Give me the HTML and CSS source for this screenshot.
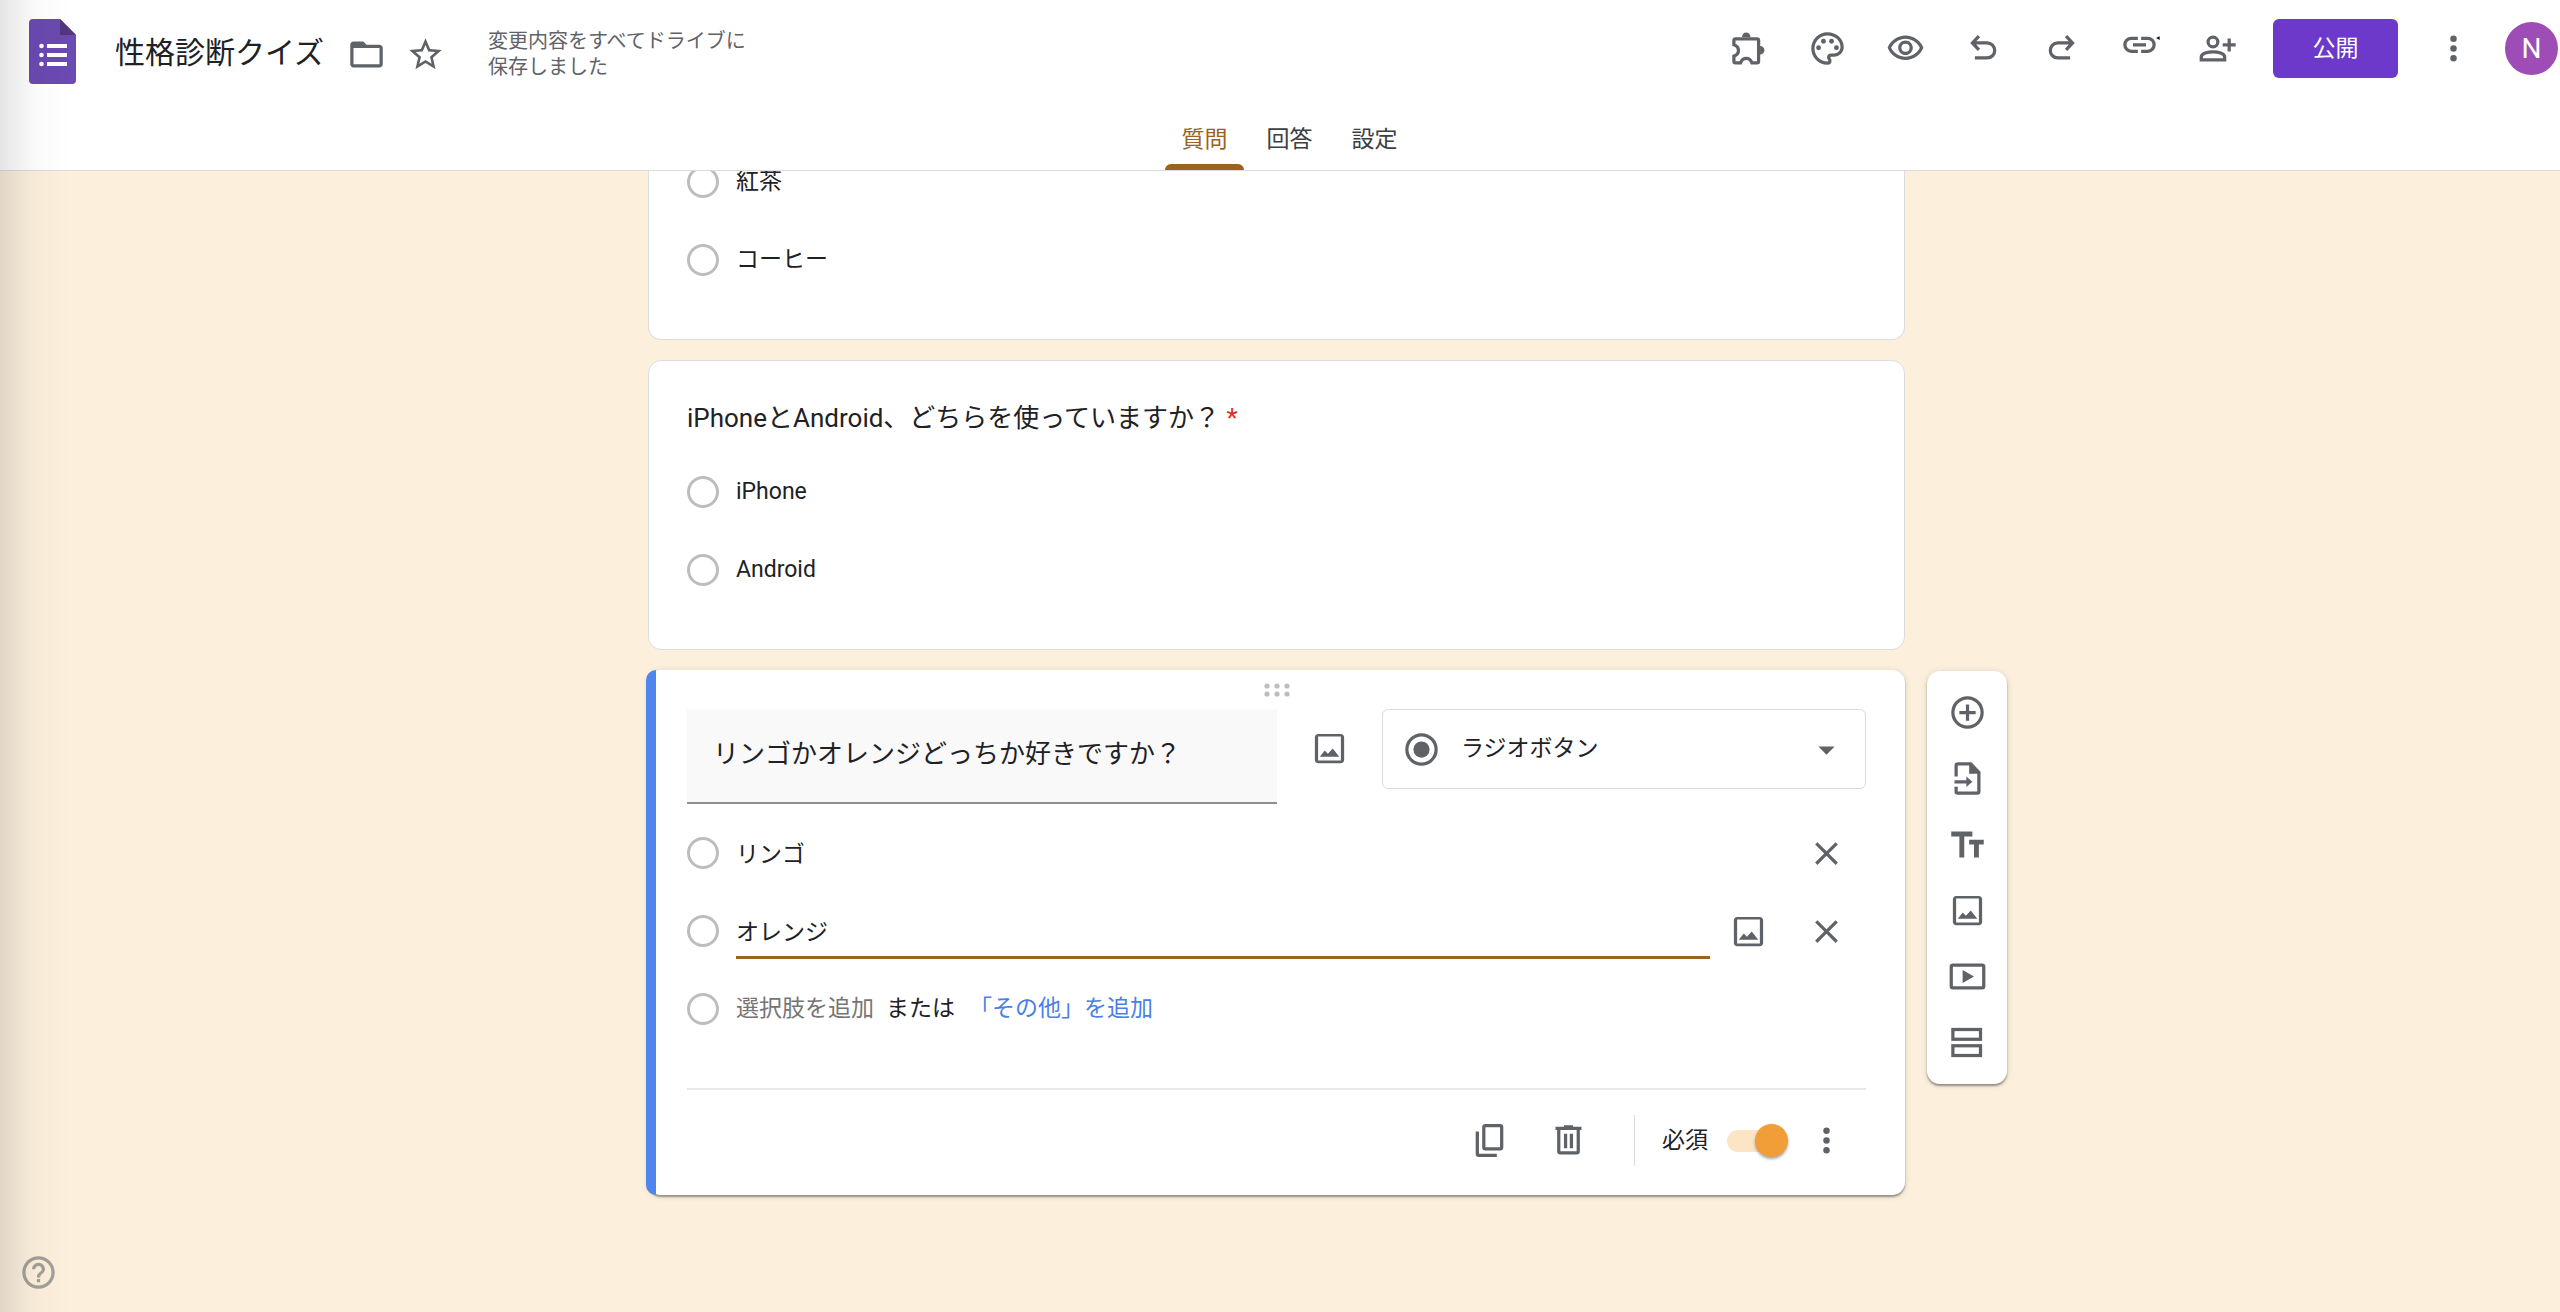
FILE: index.html
```html
<!DOCTYPE html>
<html lang="ja">

<head>
  <meta charset="utf-8" />
  <title>性格診断クイズ</title>
  <meta name="viewport" content="width=device-width, initial-scale=1">
  <link rel="stylesheet" href="styles.css">
</head>

<body>
  <svg class="sprite" aria-hidden="true">
    <symbol id="icon-image" viewBox="0 0 24 24">
      <path d="M19 3H5c-1.1 0-2 .9-2 2v14c0 1.1.9 2 2 2h14c1.1 0 2-.9 2-2V5c0-1.1-.9-2-2-2zm0 16.4H5V4.6h14z"/>
      <path d="M6 17l3.1-3.8L11 15.3l3-3.3 4 5z"/>
    </symbol>
    <symbol id="icon-close" viewBox="0 0 24 24">
      <path d="M19 6.4L17.6 5 12 10.6 6.4 5 5 6.4l5.6 5.6L5 17.6 6.4 19l5.6-5.6 5.6 5.6 1.4-1.4-5.6-5.6z"/>
    </symbol>
    <symbol id="icon-more" viewBox="0 0 24 24">
      <circle cx="12" cy="6" r="2"/><circle cx="12" cy="12" r="2"/><circle cx="12" cy="18" r="2"/>
    </symbol>
  </svg>

  <header class="header">
    <div class="header-top">
      <svg class="logo" viewBox="0 0 47 65">
        <path fill="#6b4ab1" d="M4 0h27l16 16v45a4 4 0 0 1-4 4H4a4 4 0 0 1-4-4V4a4 4 0 0 1 4-4z"/>
        <path fill="#523682" d="M31 0l16 16H31z"/>
        <g fill="#fff">
          <circle cx="12.5" cy="27" r="2.3"/><circle cx="12.5" cy="36" r="2.3"/><circle cx="12.5" cy="45" r="2.3"/>
          <path d="M18 25h20v4H18zM18 34h20v4H18zM18 43h20v4H18z"/>
        </g>
      </svg>
      <input class="form-title" type="text" value="性格診断クイズ" aria-label="フォームのタイトル">
      <div class="file-actions">
        <button class="icon-btn" aria-label="フォルダに移動">
          <svg class="icon" viewBox="0 0 24 24"><path d="M20 6h-8l-2-2H4c-1.1 0-2 .9-2 2v12c0 1.1.9 2 2 2h16c1.1 0 2-.9 2-2V8c0-1.1-.9-2-2-2zm0 12H4V8h16z"/></svg>
        </button>
        <button class="icon-btn" aria-label="スターを付ける">
          <svg class="icon" viewBox="0 0 24 24"><path d="M22 9.24l-7.19-.62L12 2 9.19 8.63 2 9.24l5.46 4.73L5.82 21 12 17.27 18.18 21l-1.63-7.03L22 9.24zM12 15.4l-3.76 2.27 1-4.28-3.32-2.88 4.38-.38L12 6.1l1.71 4.04 4.38.38-3.32 2.88 1 4.28L12 15.4z"/></svg>
        </button>
      </div>
      <p class="save-state">変更内容をすべてドライブに保存しました</p>

      <div class="toolbar">
        <div class="tools">
          <button class="icon-btn" aria-label="アドオン">
            <svg class="icon" viewBox="0 0 24 24">
              <path class="line" d="M3.4 6h13.2a1 1 0 0 1 1 1v12.9a1 1 0 0 1-1 1h-3.1c-.6-1.8-1.9-2.8-3.5-2.8s-2.9 1-3.5 2.8H3.4a1 1 0 0 1-1-1v-3.2C4.2 16.1 5.2 14.8 5.2 13.2S4.2 10.3 2.4 9.7V7a1 1 0 0 1 1-1z"/>
              <path d="M7.4 5a2.6 2.9 0 0 1 5.2 0zM18.5 10.5a2.7 2.6 0 0 1 0 5.2z"/>
            </svg>
          </button>
          <button class="icon-btn" aria-label="テーマをカスタマイズ">
            <svg class="icon" viewBox="0 0 24 24">
              <path d="M12 22C6.49 22 2 17.51 2 12S6.49 2 12 2s10 4.04 10 9c0 3.31-2.69 6-6 6h-1.77c-.28 0-.5.22-.5.5 0 .12.05.23.13.33.41.47.64 1.06.64 1.67A2.5 2.5 0 0 1 12 22zm0-18c-4.41 0-8 3.59-8 8s3.59 8 8 8c.28 0 .5-.22.5-.5a.54.54 0 0 0-.14-.35c-.41-.46-.63-1.05-.63-1.65a2.5 2.5 0 0 1 2.5-2.5H16c2.21 0 4-1.79 4-4 0-3.86-3.59-7-8-7z"/>
              <circle cx="6.5" cy="11.5" r="1.5"/><circle cx="9.5" cy="7.5" r="1.5"/><circle cx="14.5" cy="7.5" r="1.5"/><circle cx="17.5" cy="11.5" r="1.5"/>
            </svg>
          </button>
          <button class="icon-btn" aria-label="プレビュー">
            <svg class="icon" viewBox="0 0 24 24"><path d="M12 6c3.79 0 7.17 2.13 8.82 5.5C19.17 14.87 15.79 17 12 17s-7.17-2.13-8.82-5.5C4.83 8.13 8.21 6 12 6m0-2C7 4 2.73 7.11 1 11.5 2.73 15.89 7 19 12 19s9.27-3.11 11-7.5C21.27 7.11 17 4 12 4zm0 5a2.5 2.5 0 0 1 0 5 2.5 2.5 0 0 1 0-5m0-2c-2.48 0-4.5 2.02-4.5 4.5S9.52 16 12 16s4.5-2.02 4.5-4.5S14.48 7 12 7z"/></svg>
          </button>
          <button class="icon-btn" aria-label="元に戻す">
            <svg class="icon" viewBox="0 0 24 24"><path class="line" d="M9.2 4.4L5.2 8.6l4 4.2M5.2 8.6h9.1a4.6 4.6 0 0 1 0 9.2H6.7"/></svg>
          </button>
          <button class="icon-btn" aria-label="やり直す">
            <svg class="icon" viewBox="0 0 24 24"><path class="line" d="M14.8 4.4l4 4.2-4 4.2M18.8 8.6H9.7a4.6 4.6 0 0 0 0 9.2h7.6"/></svg>
          </button>
          <button class="icon-btn" aria-label="回答者へのリンクをコピー">
            <svg class="icon" viewBox="0 0 24 24">
              <path class="line" d="M11 5.7H7a4 4 0 0 0 0 8h4M13 5.7h4a4 4 0 0 1 0 8h-4M8 9.7h8"/>
              <path fill="#000" d="M22.2 5.6l2.2-1.2v2.4z"/>
            </svg>
          </button>
          <button class="icon-btn" aria-label="共同編集者を追加">
            <svg class="icon" viewBox="0 0 24 24"><path class="line" d="M9.2 5a3 3 0 1 1 0 6 3 3 0 0 1 0-6zM2 19v-1.8C2 15 6.2 14 9.2 14s7.2 1 7.2 3.2V19zM19.2 5.8v8M15.2 9.8h8"/></svg>
          </button>
        </div>
        <button class="publish">公開</button>
        <button class="icon-btn" aria-label="その他"><svg class="icon"><use href="#icon-more"/></svg></button>
        <button class="avatar" aria-label="アカウント">N</button>
      </div>
    </div>

    <nav class="tabs">
      <a class="current" href="#">質問</a>
      <a href="#">回答</a>
      <a href="#">設定</a>
    </nav>
  </header>

  <main class="board">
    <section class="card card-cut">
      <label class="option"><input type="radio" name="drink" disabled><span>紅茶</span></label>
      <label class="option"><input type="radio" name="drink" disabled><span>コーヒー</span></label>
    </section>

    <section class="card">
      <h2 class="question">iPhoneとAndroid、どちらを使っていますか？ <span class="required">*</span></h2>
      <label class="option"><input type="radio" name="phone" disabled><span>iPhone</span></label>
      <label class="option"><input type="radio" name="phone" disabled><span>Android</span></label>
    </section>

    <section class="card card-edit">
      <div class="drag">
        <svg width="26" height="16" viewBox="0 0 26 16">
          <circle cx="3" cy="4" r="2.6"/><circle cx="13" cy="4" r="2.6"/><circle cx="23" cy="4" r="2.6"/>
          <circle cx="3" cy="12" r="2.6"/><circle cx="13" cy="12" r="2.6"/><circle cx="23" cy="12" r="2.6"/>
        </svg>
      </div>

      <div class="edit-head">
        <input class="question-input" type="text" value="リンゴかオレンジどっちか好きですか？" aria-label="質問">
        <button class="icon-btn" aria-label="画像を追加"><svg class="icon"><use href="#icon-image"/></svg></button>
        <div class="type-select">
          <svg class="icon" viewBox="0 0 24 24"><circle class="line" cx="12" cy="12" r="9"/><circle cx="12" cy="12" r="5"/></svg>
          <select aria-label="質問の形式">
            <option>ラジオボタン</option>
          </select>
          <svg class="icon" viewBox="0 0 24 24"><path d="M7 10.2l5 5 5-5z"/></svg>
        </div>
      </div>

      <div class="edit-options">
        <div class="option">
          <input type="radio" name="fruit" aria-label="選択肢 1" disabled>
          <input class="option-input" type="text" value="リンゴ" aria-label="選択肢 1 のテキスト">
          <button class="icon-btn" aria-label="削除"><svg class="icon"><use href="#icon-close"/></svg></button>
        </div>
        <div class="option">
          <input type="radio" name="fruit" aria-label="選択肢 2" disabled>
          <input class="option-input editing" type="text" value="オレンジ" aria-label="選択肢 2 のテキスト">
          <button class="icon-btn" aria-label="画像を追加"><svg class="icon"><use href="#icon-image"/></svg></button>
          <button class="icon-btn" aria-label="削除"><svg class="icon"><use href="#icon-close"/></svg></button>
        </div>
        <div class="option">
          <input type="radio" name="fruit" aria-label="新しい選択肢" disabled>
          <button class="add-option">選択肢を追加</button>
          <span class="or">または</span>
          <button class="add-other">「その他」を追加</button>
        </div>
      </div>

      <div class="edit-foot">
        <button class="icon-btn" aria-label="コピーを作成">
          <svg class="icon" viewBox="0 0 24 24"><path class="line" d="M9.5 2.8h9a1 1 0 0 1 1 1v12.4a1 1 0 0 1-1 1h-9a1 1 0 0 1-1-1V3.8a1 1 0 0 1 1-1zM4.5 6.5v13.7a1 1 0 0 0 1 1h11"/></svg>
        </button>
        <button class="icon-btn" aria-label="削除">
          <svg class="icon" viewBox="0 0 24 24"><path class="line" d="M4 4.6h16M9.2 3.6h5.6M6 5v13.6a1 1 0 0 0 1 1h10a1 1 0 0 0 1-1V5M10.2 7.8v9M13.8 7.8v9"/></svg>
        </button>
        <div class="required-box">
          <label for="required">必須</label>
          <input class="toggle" id="required" type="checkbox" checked>
          <button class="icon-btn" aria-label="その他のオプション"><svg class="icon"><use href="#icon-more"/></svg></button>
        </div>
      </div>
    </section>

    <aside class="side-tools">
      <button class="icon-btn" aria-label="質問を追加">
        <svg class="icon" viewBox="0 0 24 24"><path class="line" d="M12 3a9 9 0 1 1 0 18 9 9 0 0 1 0-18zM12 7v10M7 12h10"/></svg>
      </button>
      <button class="icon-btn" aria-label="質問をインポート">
        <svg class="icon" viewBox="0 0 24 24">
          <path class="line" d="M5 10.8V4a1 1 0 0 1 1-1h8l5 5.2V20a1 1 0 0 1-1 1H6a1 1 0 0 1-1-1v-3M4 14h9"/>
          <path d="M13 2.5h1.5l5 5.5v1H13zM11.3 10.8L15 14l-3.7 3.2z"/>
        </svg>
      </button>
      <button class="icon-btn" aria-label="タイトルと説明を追加">
        <svg class="icon" viewBox="0 0 24 24"><path d="M2 4v3h5v13h3V7h5V4zM13 9v3h3v8h3v-8h3V9z"/></svg>
      </button>
      <button class="icon-btn" aria-label="画像を追加"><svg class="icon"><use href="#icon-image"/></svg></button>
      <button class="icon-btn" aria-label="動画を追加">
        <svg class="icon" viewBox="0 0 24 24">
          <rect class="line" x="2" y="5" width="20" height="14" rx="1"/>
          <path d="M9 8l7 4-7 4z"/>
        </svg>
      </button>
      <button class="icon-btn" aria-label="セクションを追加">
        <svg class="icon" viewBox="0 0 24 24">
          <rect class="line" x="3" y="4" width="17" height="6"/><rect class="line" x="3" y="14" width="17" height="6"/>
        </svg>
      </button>
    </aside>
  </main>

  <button class="help" aria-label="ヘルプ">
    <svg class="icon" viewBox="0 0 24 24"><path d="M11 18h2v-2h-2v2zm1-16C6.48 2 2 6.48 2 12s4.48 10 10 10 10-4.48 10-10S17.52 2 12 2zm0 18c-4.41 0-8-3.59-8-8s3.59-8 8-8 8 3.59 8 8-3.59 8-8 8zm0-14c-2.21 0-4 1.79-4 4h2c0-1.1.9-2 2-2s2 .9 2 2c0 2-3 1.75-3 5h2c0-2.25 3-2.5 3-5 0-2.21-1.79-4-4-4z"/></svg>
  </button>
</body>

</html>
```

FILE: styles.css
```css
* {
  margin: 0;
  padding: 0;
  box-sizing: border-box;
}

body {
  min-height: 100vh;
  background: #fcf0dd;
  font: 23px/32px Roboto, "Noto Sans CJK JP", sans-serif;
  color: #202124;
}

/* shade along the left edge of the window */
body::before {
  content: '';
  position: fixed;
  top: 0;
  bottom: 0;
  left: 0;
  z-index: 5;
  width: 70px;
  background: linear-gradient(to right, rgba(0, 0, 0, .1), rgba(0, 0, 0, .02) 50%, transparent);
  pointer-events: none;
}

button,
input,
select {
  border: 0;
  outline: 0;
  background: none;
  font: inherit;
  color: inherit;
}

button {
  cursor: pointer;
}

a {
  color: inherit;
  text-decoration: none;
}

.sprite {
  display: none;
}

.icon {
  display: block;
  flex: none;
  width: 39px;
  height: 39px;
  overflow: visible;
  fill: #5f6368;
}
.icon .line {
  fill: none;
  stroke: #5f6368;
  stroke-width: 2;
}
.icon-btn {
  flex: none;
}

/* header */
.header {
  position: relative;
  z-index: 2;
  border-bottom: 1px solid #dadce0;
  background: #fff;
}
.header-top {
  display: flex;
  align-items: center;
  height: 103px;
  padding: 0 2px 0 29px;
}
.logo {
  flex: none;
  width: 47px;
  height: 65px;
  margin-right: 39px;
}
.form-title {
  width: 212px;
  margin-right: 20px;
  padding-top: 2px;
  font-size: 30px;
  line-height: 40px;
}
.file-actions {
  display: flex;
  gap: 20px;
  padding-top: 6px;
}
.save-state {
  width: 265px;
  margin-left: 43px;
  padding-top: 4px;
  font-size: 20px;
  line-height: 26px;
  color: #5f6368;
}
.toolbar {
  display: flex;
  align-items: center;
  gap: 36px;
  margin-left: auto;
  padding-bottom: 6px;
}
.tools {
  display: flex;
  gap: 39px;
}
.publish {
  width: 125px;
  height: 59px;
  border-radius: 6px;
  background: #6d39ca;
  color: #fff;
}
.avatar {
  width: 53px;
  height: 53px;
  margin-left: -4px;
  border-radius: 50%;
  background: #9f4db6;
  font-size: 28px;
  color: #fff;
}

.tabs {
  display: flex;
  justify-content: center;
  gap: 6px;
  padding-left: 19px;
  color: #3c4043;
}
.tabs a {
  position: relative;
  width: 79px;
  padding: 21px 0 14px;
  text-align: center;
}
.tabs .current {
  color: #9a6420;
}
.tabs .current::after {
  content: '';
  position: absolute;
  right: 0;
  bottom: 0;
  left: 0;
  height: 6px;
  border-radius: 6px 6px 0 0;
  background: #9a6420;
}

/* questions, scrolled under the header */
.board {
  display: grid;
  grid-template-columns: 1fr minmax(0, 1257px) 1fr;
  row-gap: 20px;
  margin-top: -28px;
  padding: 0 7px 60px 0;
}
.card {
  position: relative;
  grid-column: 2;
  padding: 37px 38px 40px;
  border: 1px solid #dadce0;
  border-radius: 13px;
  background: #fff;
}
.card-cut {
  padding-top: 0;
  border-top: 0;
  border-radius: 0 0 13px 13px;
}
.question {
  margin-bottom: 15px;
  font-size: 26px;
  font-weight: normal;
  line-height: 40px;
}
.required {
  color: #d93025;
}

.option {
  display: flex;
  align-items: center;
  height: 78px;
}
.option input[type="radio"] {
  appearance: none;
  flex: none;
  width: 32px;
  height: 32px;
  margin-right: 17px;
  border: 3px solid #bdbdbd;
  border-radius: 50%;
}

/* question being edited */
.card-edit {
  padding: 0 39px;
  border: 0;
  box-shadow: 0 2px 2px rgba(0, 0, 0, .35), 0 1px 6px rgba(0, 0, 0, .15);
}
.card-edit::before {
  content: '';
  position: absolute;
  top: 0;
  bottom: 0;
  left: -2px;
  width: 10px;
  border-radius: 13px 0 0 13px;
  background: #5185ee;
}
.drag {
  display: flex;
  justify-content: center;
  align-items: center;
  height: 39px;
  fill: #bdbdbd;
}
.edit-head {
  display: flex;
  align-items: flex-start;
  gap: 33px;
}
.edit-head .icon-btn {
  height: 78px;
}
.question-input {
  flex: 1;
  min-width: 0;
  height: 95px;
  padding: 0 26px 8px;
  border-bottom: 2px solid #8e8e8e;
  background: #f9f9f9;
  font-size: 26px;
}
.type-select {
  display: flex;
  align-items: center;
  flex: 0 1 484px;
  height: 80px;
  padding: 0 19px;
  border: 1px solid #dadce0;
  border-radius: 6px;
}
.type-select select {
  appearance: none;
  flex: 1;
  min-width: 0;
  height: 60px;
  padding-left: 20px;
}

.edit-options {
  margin: 10px 0 40px;
}
.edit-options .option {
  padding-right: 20px;
}
.option-input {
  flex: 1;
  min-width: 0;
  height: 56px;
  border-bottom: 3px solid transparent;
}
.option-input.editing {
  border-color: #9a6420;
}
.edit-options .icon-btn {
  margin-left: 19px;
}
.edit-options .icon-btn + .icon-btn {
  margin-left: 39px;
}
.add-option {
  color: #757575;
}
.or {
  margin: 0 14px 0 12px;
}
.add-other {
  color: #4a7fe8;
}

.edit-foot {
  display: flex;
  justify-content: flex-end;
  align-items: center;
  gap: 40px;
  height: 107px;
  padding: 0 20px 4px 0;
  border-top: 2px solid #e8e8e8;
}
.required-box {
  display: flex;
  align-items: center;
  gap: 19px;
  height: 51px;
  margin-left: 6px;
  padding-left: 27px;
  border-left: 1px solid #dadce0;
}
.toggle {
  appearance: none;
  position: relative;
  display: flex;
  align-items: center;
  justify-content: flex-end;
  width: 61px;
  height: 33px;
}
.toggle::before {
  content: '';
  position: absolute;
  left: 0;
  width: 55px;
  height: 22px;
  border-radius: 11px;
  background: #fbe5c4;
}
.toggle::after {
  content: '';
  position: relative;
  width: 33px;
  height: 33px;
  border-radius: 50%;
  background: #f19e38;
  box-shadow: 0 2px 3px rgba(0, 0, 0, .35);
}

.side-tools {
  grid-column: 3;
  display: flex;
  flex-direction: column;
  align-items: center;
  align-self: start;
  gap: 27px;
  width: 80px;
  margin: 1px 0 0 22px;
  padding: 22px 0;
  border-radius: 13px;
  background: #fff;
  box-shadow: 0 2px 2px rgba(0, 0, 0, .35), 0 1px 6px rgba(0, 0, 0, .15);
}

.help {
  position: fixed;
  bottom: 20px;
  left: 19px;
}
.help .icon {
  fill: #757575;
  opacity: .65;
}
```
